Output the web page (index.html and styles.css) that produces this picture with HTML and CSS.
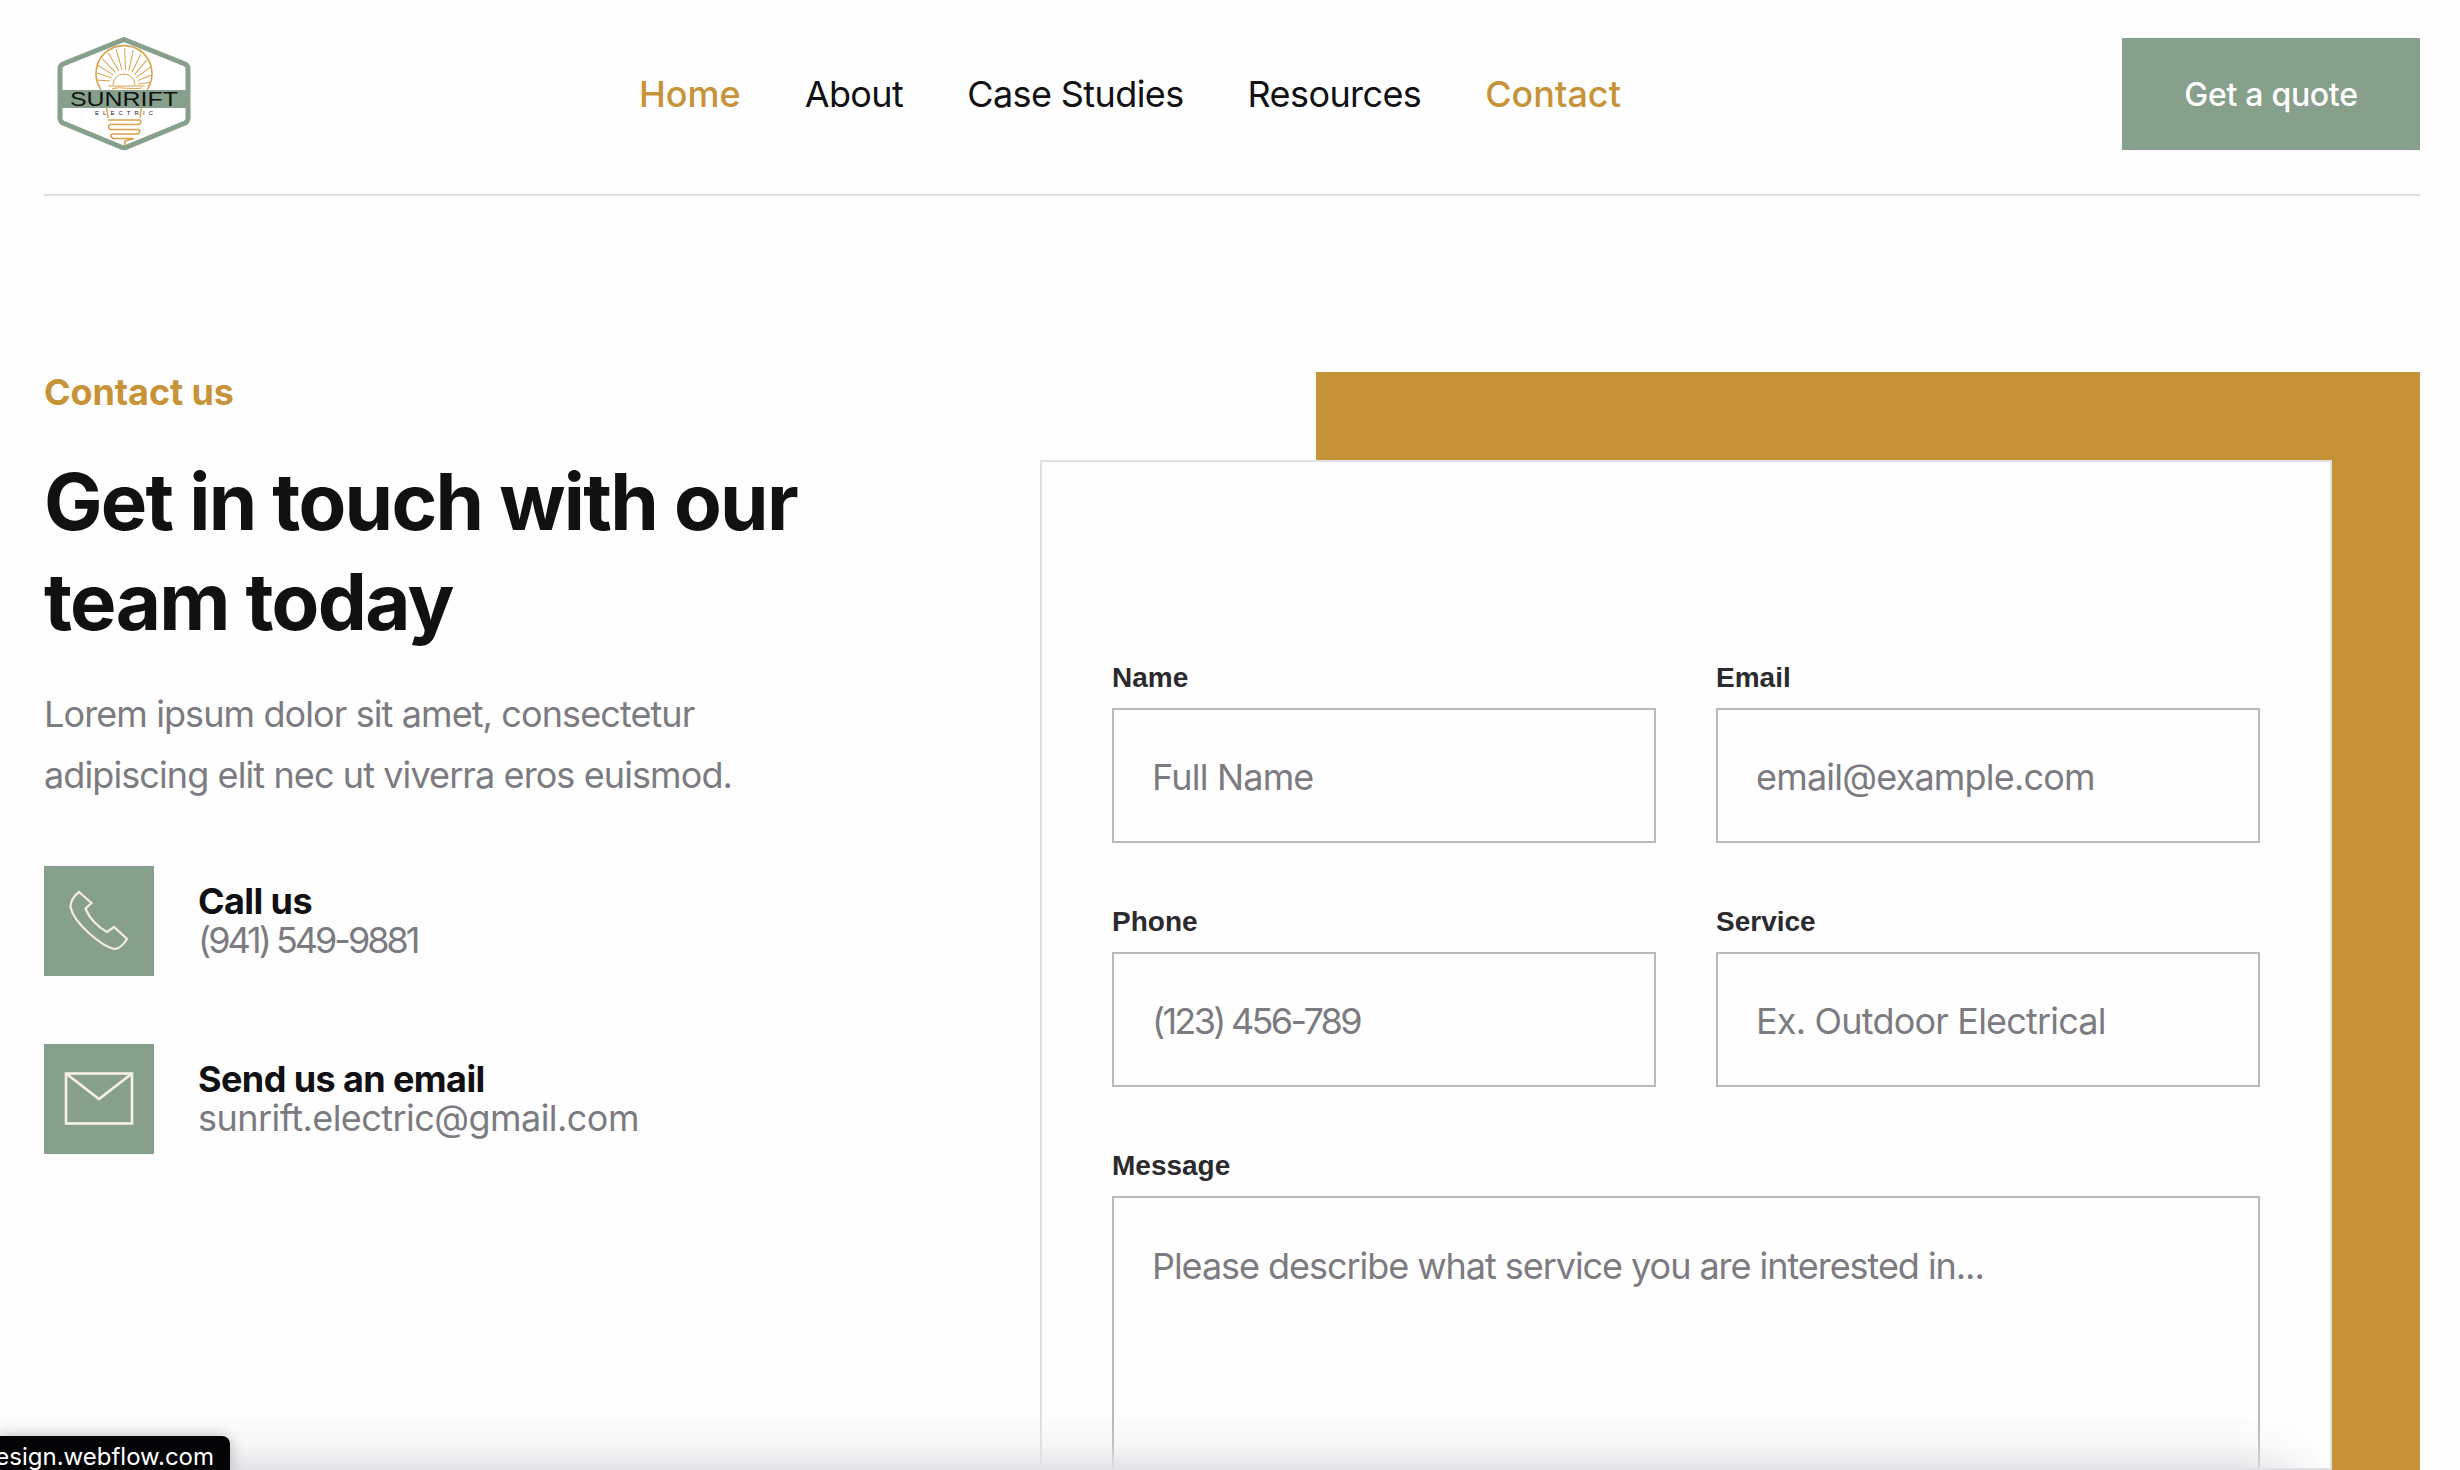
FILE: index.html
```html
<!DOCTYPE html>
<html lang="en">
<head>
    <meta charset="UTF-8">
    <meta name="viewport" content="width=device-width, initial-scale=1.0">
    <title>Sunrift Electric - Contact</title>
    <link rel="stylesheet" href="styles.css">
</head>
<body>
    <header class="site-header">
        <a class="logo" href="#">
            <svg width="170" height="130" viewBox="40 29 170 130" fill="none">
                <defs>
                    <clipPath id="bulb-clip"><circle cx="124" cy="76" r="28"/></clipPath>
                </defs>
                <path d="M124 39.5 L185 64 Q188 65.5 188 69 V118 Q188 121.5 185 123 L127 147 Q124 148.5 121 147 L63 123 Q60 121.5 60 118 V69 Q60 65.5 63 64 Z" fill="#fff" stroke="#87a08b" stroke-width="5"/>
                <g stroke="#d9a24a" stroke-width="1">
                    <g clip-path="url(#bulb-clip)">
                        <line x1="110" y1="82" x2="80" y2="82" transform="rotate(4 124 84)"/>
                        <line x1="110" y1="82" x2="80" y2="82" transform="rotate(18 124 84)"/>
                        <line x1="110" y1="82" x2="80" y2="82" transform="rotate(32 124 84)"/>
                        <line x1="110" y1="82" x2="80" y2="82" transform="rotate(46 124 84)"/>
                        <line x1="110" y1="82" x2="80" y2="82" transform="rotate(60 124 84)"/>
                        <line x1="110" y1="82" x2="80" y2="82" transform="rotate(74 124 84)"/>
                        <line x1="110" y1="82" x2="80" y2="82" transform="rotate(88 124 84)"/>
                        <line x1="110" y1="82" x2="80" y2="82" transform="rotate(102 124 84)"/>
                        <line x1="110" y1="82" x2="80" y2="82" transform="rotate(116 124 84)"/>
                        <line x1="110" y1="82" x2="80" y2="82" transform="rotate(130 124 84)"/>
                        <line x1="110" y1="82" x2="80" y2="82" transform="rotate(144 124 84)"/>
                        <line x1="110" y1="82" x2="80" y2="82" transform="rotate(158 124 84)"/>
                        <line x1="110" y1="82" x2="80" y2="82" transform="rotate(172 124 84)"/>
                    </g>
                    <path stroke-width="1.6" d="M100 88 A28 28 0 1 1 148 88"/>
                    <path d="M113 85 A11 11 0 0 1 135 85 M108 86 H145 M112 89 C120 86 128 90 142 88"/>
                    <path stroke-width="1.4" d="M100 88 C103 95 107 104 108 118 M148 88 C145 95 141 104 140 118"/>
                    <path stroke-width="1.6" d="M108 120 H140 Q142 123 139 124.5 H110 Q107 127 110 129.5 H139 Q141 132 138 134 H112 Q109 136 113 138.5 H134 L125 141 L125 146"/>
                </g>
                <rect x="61" y="90" width="125" height="18" fill="#87a08b"/>
                <text class="logo-name" x="70" y="106" textLength="108" lengthAdjust="spacingAndGlyphs">SUNRIFT</text>
                <text class="logo-sub" x="95" y="115" textLength="58">ELECTRIC</text>
            </svg>
        </a>
        <nav class="main-nav">
            <a class="active" href="#">Home</a>
            <a href="#">About</a>
            <a href="#">Case Studies</a>
            <a href="#">Resources</a>
            <a class="active" href="#">Contact</a>
        </nav>
        <a class="quote-btn" href="#">Get a quote</a>
    </header>

    <main class="contact">
        <section class="contact-info">
            <p class="eyebrow">Contact us</p>
            <h1>Get in touch with our team today</h1>
            <p class="lead">Lorem ipsum dolor sit amet, consectetur adipiscing elit nec ut viverra eros euismod.</p>
            <div class="info-row">
                <div class="info-icon">
                    <svg width="110" height="110" viewBox="0 0 110 110" fill="none" stroke="#f3eee2" stroke-width="2.2">
                        <path d="M35 26 L47.5 37 L41.5 42.5 C45 52 54 61 63 66 L70 61 L83 73 C80 78 75 83 70 83 C58 80 30 58 26.5 41 C26 35 31 29 35 26 Z"/>
                    </svg>
                </div>
                <div class="info-text">
                    <h2>Call us</h2>
                    <p class="phone-number">(941) 549-9881</p>
                </div>
            </div>
            <div class="info-row">
                <div class="info-icon">
                    <svg width="110" height="110" viewBox="0 0 110 110" fill="none" stroke="#f6f2e8" stroke-width="2.6">
                        <rect x="22" y="29.5" width="66" height="50"/>
                        <path d="M22 29.5 L55 55 L88 29.5"/>
                    </svg>
                </div>
                <div class="info-text">
                    <h2>Send us an email</h2>
                    <p>sunrift.electric@gmail.com</p>
                </div>
            </div>
        </section>

        <section class="form-wrap">
            <form class="form-card">
                <div class="field">
                    <label for="name">Name</label>
                    <input type="text" id="name" placeholder="Full Name">
                </div>
                <div class="field">
                    <label for="email">Email</label>
                    <input type="email" id="email" placeholder="email@example.com">
                </div>
                <div class="field">
                    <label for="phone">Phone</label>
                    <input class="phone-number" type="tel" id="phone" placeholder="(123) 456-789">
                </div>
                <div class="field">
                    <label for="service">Service</label>
                    <input type="text" id="service" placeholder="Ex. Outdoor Electrical">
                </div>
                <div class="field field-wide">
                    <label for="message">Message</label>
                    <textarea id="message" placeholder="Please describe what service you are interested in..."></textarea>
                </div>
            </form>
        </section>
    </main>

    <div class="bottom-fade"></div>
    <div class="url-chip"><span>design.webflow.com</span></div>
</body>
</html>
```

FILE: styles.css
```css
* { box-sizing: border-box; }
html, body { height: 100%; }
body {
    margin: 0;
    height: 1470px;
    overflow: hidden;
    position: relative;
    background-color: #fefefe;
    color: #111113;
    font-family: Inter, "Liberation Sans", sans-serif;
}
a { color: inherit; text-decoration: none; }

/* Header */
.site-header {
    display: flex;
    align-items: center;
    height: 196px;
    margin: 0 40px 0 44px;
    padding: 38px 0 44px;
    border-bottom: 2px solid #dfdfdf;
}
.logo { display: block; width: 170px; height: 130px; flex: none; margin-left: -4px; }
.logo-name { font-family: "Liberation Sans", sans-serif; font-size: 20px; fill: #111; }
.logo-sub { font-family: "Liberation Sans", sans-serif; font-size: 6px; fill: #222; }
.main-nav { display: flex; gap: 64px; margin-left: 429px; font-size: 36px; letter-spacing: -0.6px; }
.main-nav .active { color: #c79338; font-weight: 500; letter-spacing: 0; }
.quote-btn {
    margin-left: auto;
    width: 298px;
    height: 112px;
    display: flex;
    align-items: center;
    justify-content: center;
    background-color: #87a08b;
    color: #fff;
    font-size: 32px;
    font-weight: 500;
    letter-spacing: -0.3px;
}

/* Main layout */
.contact {
    display: flex;
    height: 1098px;
    margin: 176px 40px 0 44px;
}
.contact-info { width: 996px; flex: none; }
.eyebrow {
    margin: 0 0 39px;
    color: #c79338;
    font-size: 36px;
    font-weight: 700;
    line-height: 41px;
    letter-spacing: -0.1px;
}
h1 {
    margin: 0 0 32px;
    width: 800px;
    font-size: 78px;
    font-weight: 700;
    line-height: 100px;
    letter-spacing: -1.7px;
}
.lead {
    margin: 0 0 60px;
    width: 760px;
    color: #7b7b80;
    font-size: 36px;
    line-height: 61px;
    letter-spacing: -0.9px;
}
.info-row { display: flex; align-items: center; gap: 44px; margin-bottom: 68px; }
.info-icon { width: 110px; height: 110px; flex: none; background-color: #87a08b; }
.info-icon svg { display: block; }
.info-text h2 { margin: 0; font-size: 36px; font-weight: 700; line-height: 39px; letter-spacing: -0.6px; }
.info-text p { margin: 0; color: #7b7b80; font-size: 36px; line-height: 39px; letter-spacing: -0.55px; }
.info-text .phone-number { letter-spacing: -3px; }

/* Form */
.form-wrap { position: relative; flex: 1; padding: 88px 88px 0 0; }
.form-wrap::before {
    content: "";
    position: absolute;
    z-index: 2;
    top: 0;
    right: 0;
    bottom: 0;
    left: 276px;
    background-color: #c79338;
}
.form-card {
    position: relative;
    z-index: 3;
    display: grid;
    grid-template-columns: 1fr 1fr;
    gap: 0 60px;
    align-content: start;
    height: 1010px;
    overflow: hidden;
    padding: 198px 70px 0;
    background-color: #fefefe;
    border: 2px solid #e0e0e4;
}
.field { height: 244px; }
.field-wide { grid-column: 1 / 3; }
label {
    display: block;
    height: 48px;
    color: #2b2b2e;
    font-family: "Liberation Sans", Arial, sans-serif;
    font-size: 28px;
    font-weight: 700;
    line-height: 36px;
}
input, textarea {
    display: block;
    width: 100%;
    height: 135px;
    padding: 3px 38px 0;
    background-color: transparent;
    border: 2px solid #b8b8b8;
    border-radius: 0;
    color: #111;
    font-family: Inter, "Liberation Sans", sans-serif;
    font-size: 36px;
    letter-spacing: -0.8px;
    outline: none;
    resize: none;
}
input.phone-number { letter-spacing: -2.7px; }
textarea { height: 500px; padding-top: 46px; line-height: 44px; letter-spacing: -1.05px; }
::placeholder { color: #7b7b80; opacity: 1; }

/* Browser overlay at the bottom of the window */
.bottom-fade {
    position: absolute;
    z-index: 4;
    left: 0;
    bottom: 0;
    width: 2331px;
    height: 56px;
    background: linear-gradient(to bottom, rgba(226,226,230,0), rgba(226,226,230,0.25) 55%, rgba(226,226,230,1));
    -webkit-mask-image: linear-gradient(to right, #000 96%, transparent);
    mask-image: linear-gradient(to right, #000 96%, transparent);
    pointer-events: none;
}
.url-chip {
    position: absolute;
    z-index: 5;
    left: 0;
    bottom: 0;
    width: 230px;
    height: 34px;
    display: flex;
    justify-content: flex-end;
    overflow: hidden;
    padding: 5px 16px 0 0;
    white-space: nowrap;
    background-color: #050507;
    border-top-right-radius: 8px;
    color: #fff;
    font-family: Inter, "Liberation Sans", sans-serif;
    font-size: 24px;
    line-height: 32px;
    box-shadow: 0 0 14px rgba(0,0,0,0.25);
}
.url-chip span { flex: none; }
```
